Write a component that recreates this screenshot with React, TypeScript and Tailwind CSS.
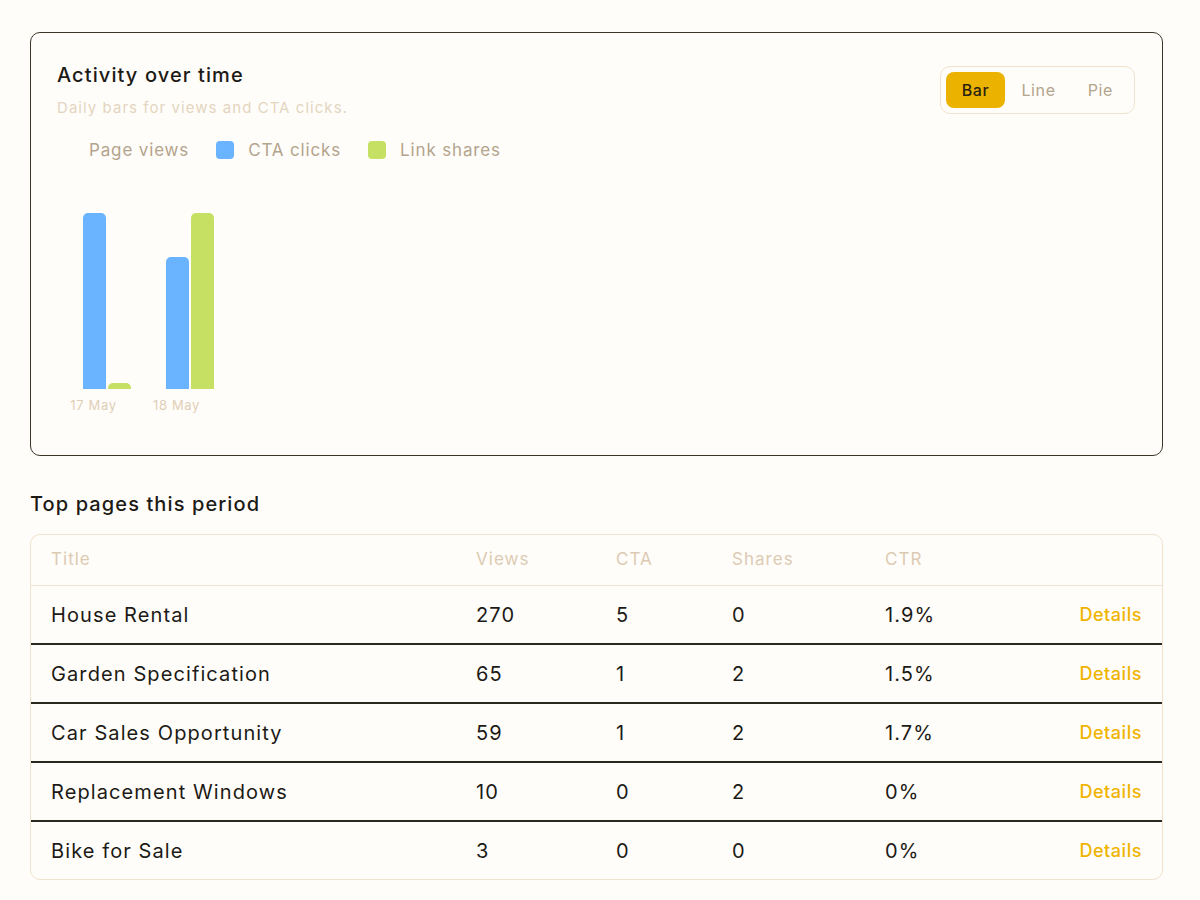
import React, { useState } from 'react';

type Row = { title: string; views: number; cta: number; shares: number; ctr: string };

const rows: Row[] = [
  { title: 'House Rental', views: 270, cta: 5, shares: 0, ctr: '1.9%' },
  { title: 'Garden Specification', views: 65, cta: 1, shares: 2, ctr: '1.5%' },
  { title: 'Car Sales Opportunity', views: 59, cta: 1, shares: 2, ctr: '1.7%' },
  { title: 'Replacement Windows', views: 10, cta: 0, shares: 2, ctr: '0%' },
  { title: 'Bike for Sale', views: 3, cta: 0, shares: 0, ctr: '0%' },
];

const days = [
  { label: '17 May', cta: 176, shares: 6 },
  { label: '18 May', cta: 132, shares: 176 },
];

const App = () => {
  const [mode, setMode] = useState('Bar');

  return (
    <div className="min-h-screen bg-[#fffdf9] pl-[30px] pr-[37px] pt-[32px] font-['Inter',sans-serif] text-[#1c1a16]">
      <section className="rounded-[10px] border border-[#3b3429] px-[26px] pt-[29px] pb-[42px]">
        <div className="flex items-start justify-between">
          <div>
            <h2 className="text-[20px] leading-[26px] font-medium tracking-[0.055em]">Activity over time</h2>
            <p className="mt-[10px] text-[15px] leading-[20px] text-[#e4d5c0] tracking-[0.07em]">Daily bars for views and CTA clicks.</p>
          </div>
          <div className="mt-[4px] mr-[1px] flex rounded-[10px] border border-[#f0e2cf] p-[5px]">
            {['Bar', 'Line', 'Pie'].map((m) => (
              <button
                key={m}
                onClick={() => setMode(m)}
                className={
                  m === mode
                    ? 'h-[36px] rounded-[8px] bg-[#ebb300] px-[16px] text-[16px] font-medium tracking-[0.04em] text-[#2a2210]'
                    : 'h-[36px] rounded-[8px] px-[16px] text-[16px] tracking-[0.04em] text-[#b3a48d]'
                }
              >
                {m}
              </button>
            ))}
          </div>
        </div>

        <div className="mt-[20px] flex items-center gap-[27px] text-[17px] leading-[24px] text-[#b3a48d] tracking-[0.05em]">
          <div className="flex items-center gap-[14px]">
            <span className="h-[18px] w-[18px] rounded-[4px] bg-transparent" />
            <span>Page views</span>
          </div>
          <div className="flex items-center gap-[14px]">
            <span className="h-[18px] w-[18px] rounded-[4px] bg-[#6ab4ff]" />
            <span>CTA clicks</span>
          </div>
          <div className="flex items-center gap-[14px]">
            <span className="h-[18px] w-[18px] rounded-[4px] bg-[#c5e063]" />
            <span>Link shares</span>
          </div>
        </div>

        <div className="-ml-[5px] mt-[51px] flex">
          {days.map((d) => (
            <div key={d.label} className="w-[83px]">
              <div className="flex h-[176px] items-end gap-[2px] pl-[31px]">
                <div className="w-[23px] rounded-t-[5px] bg-[#6ab4ff]" style={{ height: d.cta }} />
                <div className="w-[23px] rounded-t-[5px] bg-[#c5e063]" style={{ height: d.shares }} />
              </div>
              <div className="mt-[8px] text-center text-[13px] leading-[16px] text-[#e0cfb8] tracking-[0.05em]">{d.label}</div>
            </div>
          ))}
        </div>
      </section>

      <h3 className="mt-[35px] text-[20px] leading-[26px] font-medium tracking-[0.055em]">Top pages this period</h3>

      <div className="mt-[17px] overflow-hidden rounded-[10px] border border-[#f0e2cf]">
        <div className="grid h-[51px] grid-cols-[425px_140px_116px_153px_1fr_auto] items-center border-b border-[#f0e2cf] px-5 text-[17px] text-[#dccbb3] tracking-[0.06em]">
          <span>Title</span>
          <span>Views</span>
          <span>CTA</span>
          <span>Shares</span>
          <span>CTR</span>
          <span />
        </div>
        {rows.map((r, i) => (
          <div
            key={r.title}
            className={
              'grid grid-cols-[425px_140px_116px_153px_1fr_auto] items-center px-5 text-[20px] tracking-[0.055em] ' +
              (i < rows.length - 1 ? 'h-[59px] border-b-2 border-[#2b2820]' : 'h-[57px]')
            }
          >
            <span>{r.title}</span>
            <span>{r.views}</span>
            <span>{r.cta}</span>
            <span>{r.shares}</span>
            <span>{r.ctr}</span>
            <a className="text-[18px] font-medium text-[#f0b400] tracking-[0.03em]">Details</a>
          </div>
        ))}
      </div>
    </div>
  );
};

export default App;
